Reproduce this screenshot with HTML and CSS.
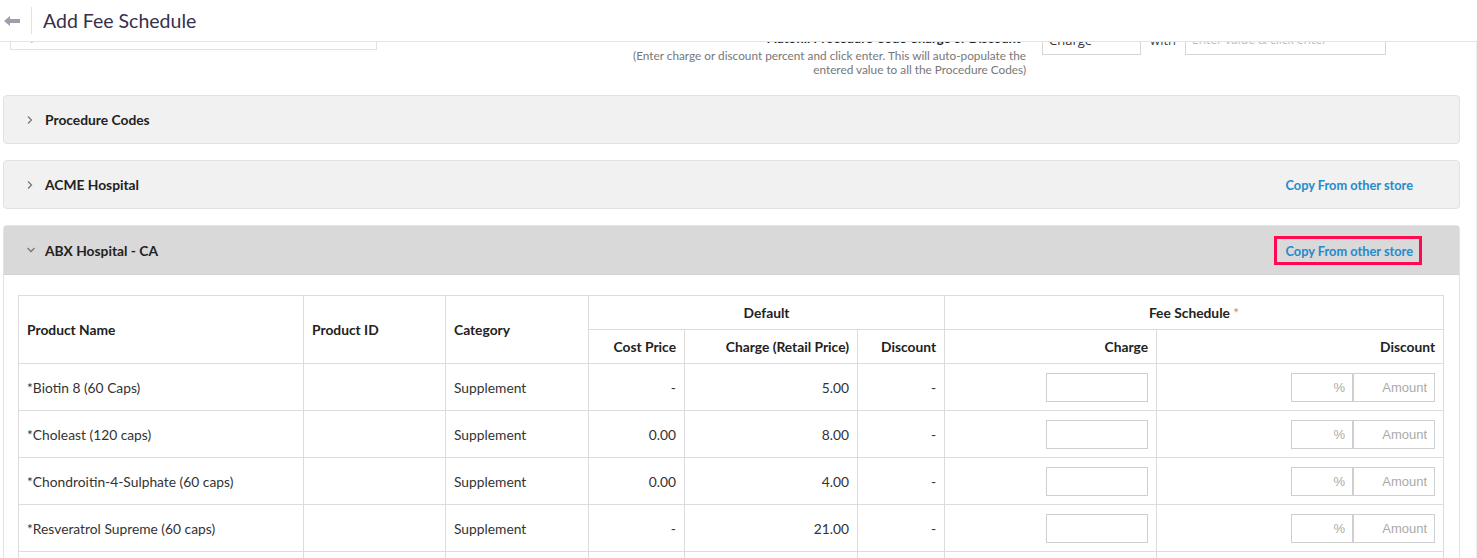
FILE: index.html
```html
<!DOCTYPE html>
<html lang="en">
<head>
  <meta charset="UTF-8">
  <title>Add Fee Schedule</title>
  <link rel="stylesheet" href="styles.css">
</head>
<body>
  <div class="topbar">
    <a class="back" href="#">
      <svg width="16" height="10" viewBox="0 0 16 10"><path d="M0 5 L6 0 L6 3 L16 3 L16 7 L6 7 L6 10 Z" fill="#a29dac"/></svg>
    </a>
    <h1>Add Fee Schedule</h1>
  </div>

  <div class="viewport">
    <div class="page">
      <div class="top-row">
        <div class="search-box"><span class="search-icon">&#9906;</span><span class="search-text">Search</span></div>
        <div class="autofill">
          <div class="autofill-label">
            <div class="label">Autofill Procedure Code Charge or Discount*</div>
            <p class="hint">(Enter charge or discount percent and click enter. This will auto-populate the<br>entered value to all the Procedure Codes)</p>
          </div>
          <div class="select-box">Charge</div>
          <span class="with">with</span>
          <input class="value-input" type="text" placeholder="Enter value &amp; click enter">
        </div>
      </div>

      <div class="panel">
        <div class="panel-head">
          <span class="chev"><svg width="8" height="10" viewBox="0 0 8 10"><path d="M2 1.5 L5.5 5 L2 8.5" fill="none" stroke="#777" stroke-width="1.3"/></svg></span>
          <span class="panel-title">Procedure Codes</span>
        </div>
      </div>

      <div class="panel">
        <div class="panel-head">
          <span class="chev"><svg width="8" height="10" viewBox="0 0 8 10"><path d="M2 1.5 L5.5 5 L2 8.5" fill="none" stroke="#777" stroke-width="1.3"/></svg></span>
          <span class="panel-title">ACME Hospital</span>
          <a class="copy-link" href="#">Copy From other store</a>
        </div>
      </div>

      <div class="panel open">
        <div class="panel-head">
          <span class="chev"><svg width="10" height="8" viewBox="0 0 10 8"><path d="M1.5 2 L5 5.5 L8.5 2" fill="none" stroke="#777" stroke-width="1.3"/></svg></span>
          <span class="panel-title">ABX Hospital - CA</span>
          <a class="copy-link marked" href="#">Copy From other store</a>
        </div>
        <div class="panel-body">
          <table class="fees">
            <colgroup>
              <col style="width:285px"><col style="width:142px"><col style="width:143px">
              <col style="width:96px"><col style="width:173px"><col style="width:87px">
              <col style="width:212px"><col style="width:287px">
            </colgroup>
            <thead>
              <tr>
                <th rowspan="2">Product Name</th>
                <th rowspan="2">Product ID</th>
                <th rowspan="2">Category</th>
                <th colspan="3" class="center">Default</th>
                <th colspan="2" class="center">Fee Schedule <span class="req">*</span></th>
              </tr>
              <tr>
                <th class="num">Cost Price</th>
                <th class="num">Charge (Retail Price)</th>
                <th class="num">Discount</th>
                <th class="num">Charge</th>
                <th class="num">Discount</th>
              </tr>
            </thead>
            <tbody>
              <tr>
                <td>*Biotin 8 (60 Caps)</td><td></td><td>Supplement</td>
                <td class="num">-</td><td class="num">5.00</td><td class="num">-</td>
                <td class="num"><input class="charge" type="text"></td>
                <td class="num"><input class="pct" type="text" placeholder="%"><input class="amt" type="text" placeholder="Amount"></td>
              </tr>
              <tr>
                <td>*Choleast (120 caps)</td><td></td><td>Supplement</td>
                <td class="num">0.00</td><td class="num">8.00</td><td class="num">-</td>
                <td class="num"><input class="charge" type="text"></td>
                <td class="num"><input class="pct" type="text" placeholder="%"><input class="amt" type="text" placeholder="Amount"></td>
              </tr>
              <tr>
                <td>*Chondroitin-4-Sulphate (60 caps)</td><td></td><td>Supplement</td>
                <td class="num">0.00</td><td class="num">4.00</td><td class="num">-</td>
                <td class="num"><input class="charge" type="text"></td>
                <td class="num"><input class="pct" type="text" placeholder="%"><input class="amt" type="text" placeholder="Amount"></td>
              </tr>
              <tr>
                <td>*Resveratrol Supreme (60 caps)</td><td></td><td>Supplement</td>
                <td class="num">-</td><td class="num">21.00</td><td class="num">-</td>
                <td class="num"><input class="charge" type="text"></td>
                <td class="num"><input class="pct" type="text" placeholder="%"><input class="amt" type="text" placeholder="Amount"></td>
              </tr>
              <tr>
                <td>*Omega-3 Complete (90 caps)</td><td></td><td>Supplement</td>
                <td class="num">0.00</td><td class="num">12.00</td><td class="num">-</td>
                <td class="num"><input class="charge" type="text"></td>
                <td class="num"><input class="pct" type="text" placeholder="%"><input class="amt" type="text" placeholder="Amount"></td>
              </tr>
            </tbody>
          </table>
        </div>
      </div>
    </div>
    <div class="scrollbar"><div class="thumb"></div></div>
  </div>
</body>
</html>
```

FILE: styles.css
```css
body {
  margin: 0;
  font-family: Lato, "Open Sans", sans-serif;
  font-size: 13.8px;
  color: #333;
  background-color: #fff;
  overflow: hidden;
}

.topbar {
  height: 41px;
  border-bottom: 1px solid #e4e4e4;
  display: flex;
  align-items: center;
  background-color: #fff;
}

.back {
  width: 32px;
  height: 27px;
  border-right: 1px solid #e2e2e2;
  display: flex;
  align-items: center;
  padding-left: 4px;
  box-sizing: border-box;
}

.topbar h1 {
  margin: 0 0 0 11px;
  font-size: 19.5px;
  font-weight: normal;
  color: #36304a;
}

.viewport {
  display: flex;
  height: 516px;
  overflow: hidden;
}

.page {
  flex: 1;
  margin-top: -30px;
  padding: 0 16px 0 3px;
}

.scrollbar {
  width: 2px;
  border-left: 1px solid #ececec;
}

.thumb {
  margin-top: 66px;
  height: 107px;
  background-color: #cbbcae;
}

/* top filter row (scrolled mostly under the header) */
.top-row {
  display: flex;
  align-items: flex-start;
}

.search-box {
  margin: 6px 0 0 7px;
  width: 367px;
  height: 32px;
  box-sizing: border-box;
  border: 1px solid #e2e2e2;
  padding: 10px 16px 0;
  font-size: 13px;
  line-height: 14px;
  color: #888;
}

.search-text {
  color: #2a8fd0;
  margin-left: 14px;
}

.autofill {
  margin-left: auto;
  margin-right: 74px;
  display: flex;
  align-items: flex-start;
}

.autofill-label {
  text-align: right;
  margin: 17px 16px 18px 0;
}

.autofill-label .label {
  font-weight: bold;
  font-size: 13px;
  line-height: 18px;
  color: #222;
}

.hint {
  margin: 2px 0 0;
  font-size: 11.8px;
  line-height: 14px;
  color: #777;
}

.select-box {
  margin-top: 11px;
  width: 99px;
  height: 32px;
  box-sizing: border-box;
  border: 1px solid #d6d6d6;
  padding: 7px 6px 0;
  font-family: "Open Sans", sans-serif;
  font-size: 13px;
  color: #333;
}

.with {
  margin: 19px 9px 0 9px;
  font-family: "Open Sans", sans-serif;
  font-size: 13px;
  color: #444;
}

.value-input {
  margin-top: 11px;
  width: 201px;
  height: 32px;
  box-sizing: border-box;
  border: 1px solid #d6d6d6;
  padding: 0 6px;
  font-family: "Open Sans", sans-serif;
  font-size: 12px;
}

.value-input::placeholder {
  color: #bbb;
}

/* collapsible store panels */
.panel {
  margin-bottom: 16px;
  border: 1px solid #e2e2e2;
  border-radius: 4px;
  background-color: #f1f1f1;
}

.panel-head {
  height: 47px;
  display: flex;
  align-items: center;
  padding: 0 37px 0 22px;
}

.chev {
  width: 19px;
  display: flex;
  align-items: center;
}

.panel-title {
  font-weight: bold;
  color: #222;
}

.copy-link {
  margin-left: auto;
  padding: 4px 6px 3px 8px;
  border: 3px solid transparent;
  font-size: 12.8px;
  line-height: 16px;
  font-weight: bold;
  color: #238bcc;
  text-decoration: none;
}

.copy-link.marked {
  border-color: #ff0a50;
}

.panel.open {
  background-color: #fff;
  border-radius: 4px 4px 0 0;
}

.panel.open .panel-head {
  background-color: #d9d9d9;
  border-bottom: 1px solid #d0d0d0;
  height: 48px;
}

.panel-body {
  padding: 20px 15px 0 14px;
}

/* fee table */
.fees {
  border-collapse: collapse;
  table-layout: fixed;
  width: 1425px;
}

.fees th, .fees td {
  border: 1px solid #dcdcdc;
  padding: 0 8px;
  text-align: left;
}

.fees th {
  height: 33px;
  font-weight: bold;
  color: #222;
}

.fees td {
  height: 46px;
  color: #333;
}

.fees .center {
  text-align: center;
}

.fees .num {
  text-align: right;
}

.req {
  color: #d98a3c;
  font-weight: normal;
}

.fees input {
  height: 29px;
  box-sizing: border-box;
  border: 1px solid #cfcfcf;
  padding: 0 7px;
  text-align: right;
  font-family: "Liberation Sans", Arial, sans-serif;
  font-size: 13px;
  vertical-align: middle;
}

.fees input::placeholder {
  color: #aaa;
}

.charge {
  width: 102px;
}

.pct {
  width: 62px;
}

.amt {
  width: 82px;
}
```
